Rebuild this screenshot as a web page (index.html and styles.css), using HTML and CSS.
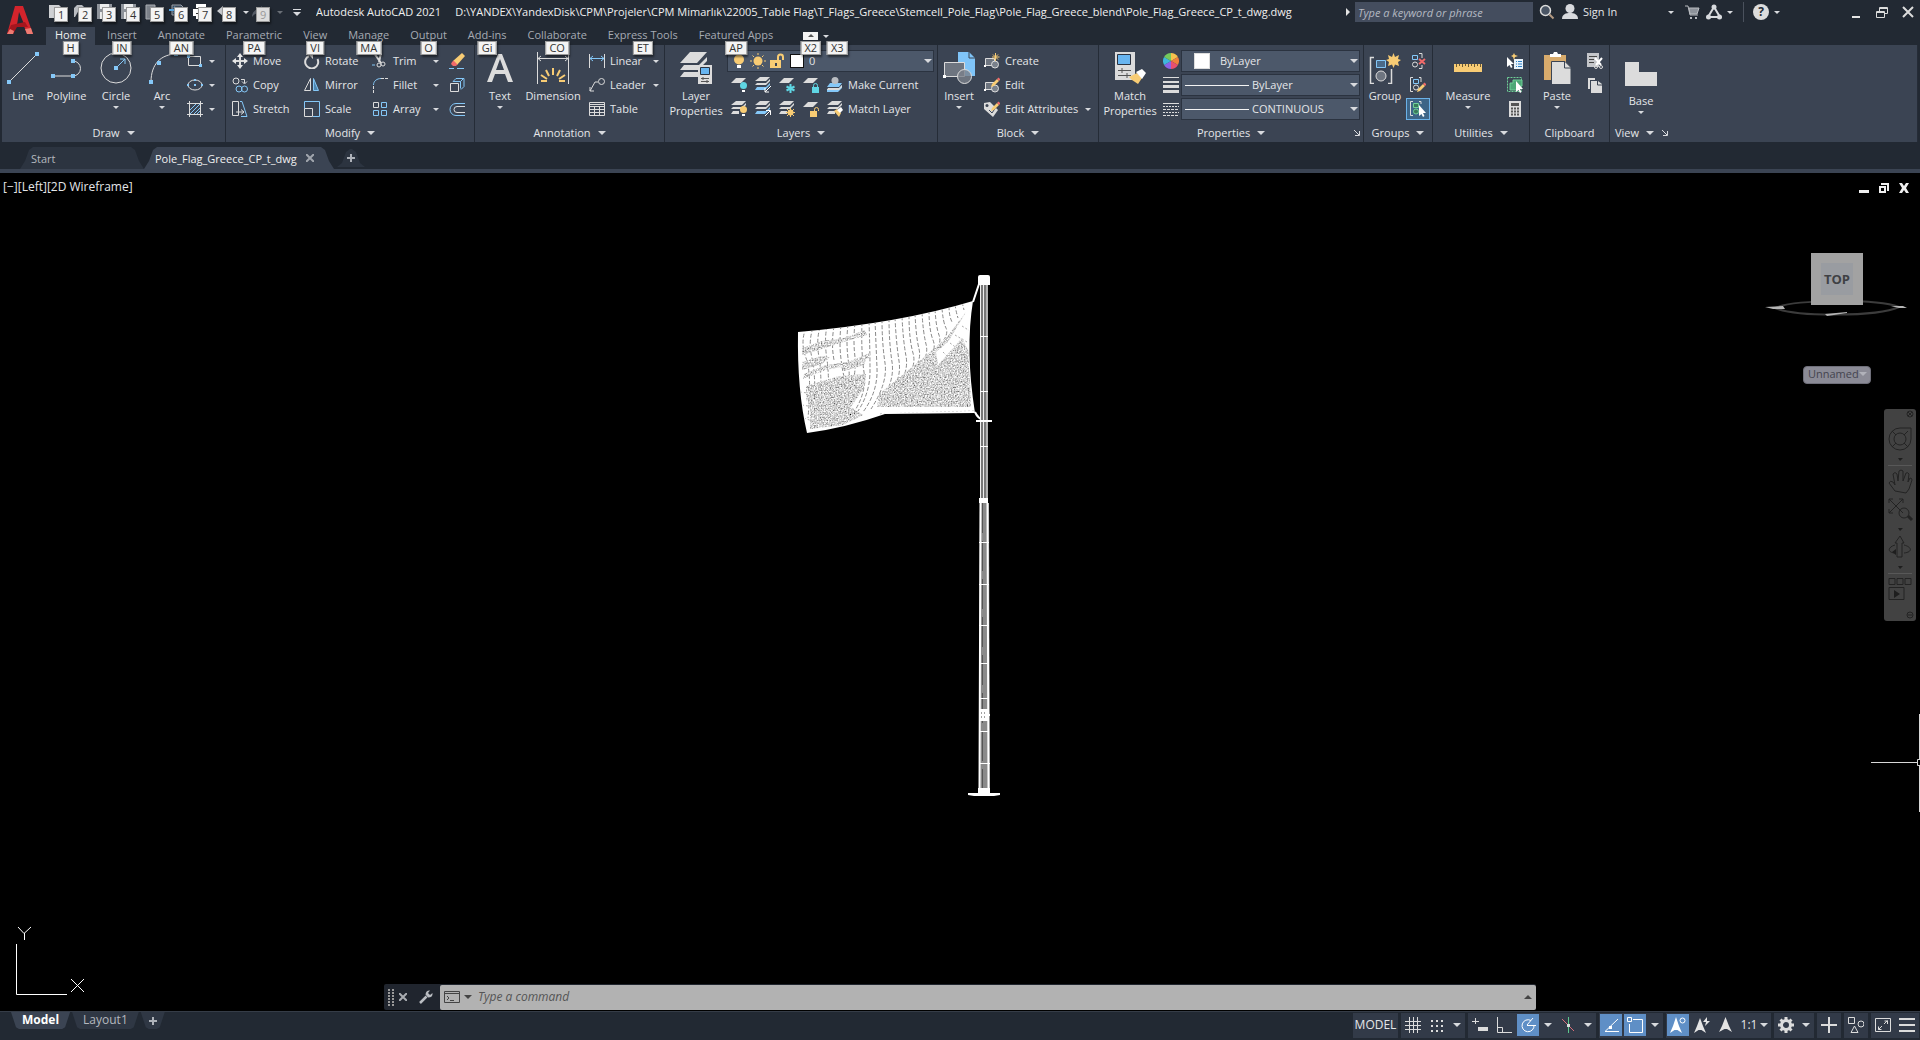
FILE: index.html
```html
<!DOCTYPE html>
<html lang="en">
<head>
<meta charset="utf-8">
<title>Autodesk AutoCAD 2021</title>
<link rel="stylesheet" href="styles.css">
</head>
<body>
<svg class="sprite" aria-hidden="true">
  <symbol id="arrow" viewBox="0 0 8 4"><path d="M0 0h8L4 4z" fill="#d8dade" stroke="none"/></symbol>
  <symbol id="launcher" viewBox="0 0 8 8"><path d="M1 1l5 5M6.500 2v4.500H2" stroke="#d8dade" fill="none"/></symbol>
  <!-- quick access -->
  <symbol id="new" viewBox="0 0 16 16"><path d="M0 1h10l3 3v10H0z" fill="#cfd1d4" stroke="none"/></symbol>
  <symbol id="open" viewBox="0 0 16 16"><path d="M1 13V4l3-3h5l2 2v3H6l-4 7z" fill="#b9bcc1" stroke="none"/></symbol>
  <symbol id="save" viewBox="0 0 16 16"><path d="M0 0h15v15H0z" fill="#8f949b" stroke="none"/><path d="M3 0h9v5H3zM3 8h9v7H3z" fill="#eceded" stroke="none"/></symbol>
  <symbol id="webopen" viewBox="0 0 16 16"><path d="M1 1h9v14H1z" fill="#7d828a" stroke="#aaadb2"/></symbol>
  <symbol id="websave" viewBox="0 0 16 16"><path d="M3 1h9l2 2v8H3z" fill="#3c4a5a" stroke="#9aa0a8"/><path d="M0 6h8M5 3l3 3-3 3" stroke="#58a6e0" stroke-width="2" fill="none"/></symbol>
  <symbol id="print" viewBox="0 0 16 16"><path d="M3 0h10v4H3zM0 5h16v7H0zM3 10h10v5H3z" fill="#fff" stroke="none"/><path d="M3 4.500h10M3 9.500h10" stroke="#333"/></symbol>
  <symbol id="undo" viewBox="0 0 16 16"><path d="M0 7l6-5v3c6 0 9 3 9 8-2-3-4-4-9-4v3z" fill="#c9cbcf" stroke="none"/></symbol>
  <symbol id="redo" viewBox="0 0 16 16"><path d="M16 7l-6-5v3C4 5 1 8 1 13c2-3 4-4 9-4v3z" fill="#555c67" stroke="none"/></symbol>
  <!-- draw -->
  <symbol id="line" viewBox="0 0 32 32"><path d="M2 30L30 2"/><path d="M0 28h4v4H0zM28 0h4v4h-4z" fill="#85c8f8" stroke="none"/></symbol>
  <symbol id="polyline" viewBox="0 0 32 32"><path d="M2 24h20M22 9a7.500 7.500 0 010 15"/><path d="M0 22h4v4H0zM20 22h4v4h-4zM20 7h4v4h-4z" fill="#85c8f8" stroke="none"/></symbol>
  <symbol id="circle" viewBox="0 0 32 32"><circle cx="16" cy="16" r="15"/><path d="M16 16l9-9M20 7h5v5" stroke="#85c8f8"/><path d="M14 14h4v4h-4z" fill="#85c8f8" stroke="none"/></symbol>
  <symbol id="arc" viewBox="0 0 32 32"><path d="M5 30C5 12 15 2 31 2"/><path d="M3 28h4v4H3zM11 9h4v4h-4zM28 0h4v4h-4z" fill="#85c8f8" stroke="none"/></symbol>
  <symbol id="rect" viewBox="0 0 16 16"><path d="M1.500 3.500h12v9h-12z"/><path d="M0 2h3v3H0zM12 11h3v3h-3z" fill="#85c8f8" stroke="none"/></symbol>
  <symbol id="ellipse" viewBox="0 0 16 16"><ellipse cx="8" cy="8" rx="7" ry="5"/><path d="M0 7h2v2H0zM7 7h2v2H7zM14 7h2v2h-2zM7 2h2v2H7z" fill="#85c8f8" stroke="none"/></symbol>
  <symbol id="hatch" viewBox="0 0 16 16"><path d="M3 9l6-6M3 13L13 3M7 13l6-6M10 13l3-3" stroke="#85c8f8"/><path d="M2.500 0v16M13.500 0v16M0 2.500h16M0 13.500h16"/></symbol>
  <!-- modify -->
  <symbol id="move" viewBox="0 0 16 16"><path d="M8 2v12M2 8h12" stroke-width="2"/><path d="M8 0l3 4H5zM8 16l3-4H5zM0 8l4-3v6zM16 8l-4-3v6z" fill="#e8e8e8" stroke="none"/></symbol>
  <symbol id="copy" viewBox="0 0 16 16"><circle cx="4" cy="4" r="3"/><path d="M9 2.500h3.500V6M10 4.500L12.500 7 15 4.500"/><g stroke="#85c8f8"><circle cx="7" cy="12" r="3"/><circle cx="12.500" cy="12" r="3"/></g></symbol>
  <symbol id="stretch" viewBox="0 0 16 16"><path d="M.5.500h6v14h-6zM4 11h8M9 8.500l3 2.500-3 2.500"/><path d="M8 .500h2l5 15H9" stroke="#85c8f8"/></symbol>
  <symbol id="rotate" viewBox="0 0 16 16"><path d="M13.500 6A6.500 6.500 0 115 3" stroke-width="2"/><path d="M3 0h6v6z" fill="#e8e8e8" stroke="none"/></symbol>
  <symbol id="mirror" viewBox="0 0 16 16"><path d="M6.500 1.500v12h-6z"/><path d="M9.500 1.500v12h5z" fill="#4f86b0" stroke="#85c8f8"/></symbol>
  <symbol id="scale" viewBox="0 0 16 16"><path d="M.5 7.500V.500h15v15H9" stroke="#85c8f8"/><path d="M.5 7.500h8v8h-8z"/></symbol>
  <symbol id="trim" viewBox="0 0 16 16"><path d="M2 0l7 10M9 0L7 9" stroke-width="2"/><circle cx="7" cy="12" r="2"/><circle cx="11" cy="11" r="2"/><path d="M0 12h3" stroke="#85c8f8"/></symbol>
  <symbol id="fillet" viewBox="0 0 16 16"><path d="M1.500 8C1.500 4 5 1.500 9 1.500" stroke="#85c8f8"/><path d="M1.500 9v7M9 1.500h7" stroke-dasharray="3 1"/></symbol>
  <symbol id="array" viewBox="0 0 16 16"><path d="M1.500 1.500h5v5h-5z"/><path d="M9.500 1.500h5v5h-5zM1.500 9.500h5v5h-5zM9.500 9.500h5v5h-5z" stroke="#85c8f8"/></symbol>
  <symbol id="erase" viewBox="0 0 16 16"><path d="M4 8l9-8 3 3-8 9z" fill="#f8cc74" stroke="none"/><path d="M3 9l1.500-1.500 4 4L7 13H4l-2-2z" fill="#f06a6a" stroke="none"/><path d="M0 15.500h5M8 15.500h7" stroke="#85c8f8"/></symbol>
  <symbol id="explode" viewBox="0 0 16 16"><path d="M1.500 6.500h8v8h-8z"/><path d="M4 4.500L7 1.500h8v8l-3 3M4 4.500h7.500v7M11.500 4.500l3-3" stroke="#85c8f8"/></symbol>
  <symbol id="offset" viewBox="0 0 16 16"><path d="M16 2.500H7a5.500 5.500 0 000 12h9" stroke="#85c8f8"/><path d="M16 5.500H8a3 3 0 000 6h8"/></symbol>
  <!-- annotation -->
  <symbol id="text" viewBox="0 0 32 32"><path d="M3 30L14 2h4l11 28h-5l-3-8H11l-3 8zM12 18h8L16 7z" fill="#dcdcdc" fill-rule="evenodd" stroke="none"/></symbol>
  <symbol id="dimension" viewBox="0 0 32 32"><path d="M.5 0v32M31.500 0v32M1 6.500h30M4 4L1 6.500 4 9M28 4l3 2.500L28 9"/><path d="M16 16v7M9 18l3 6M23 18l-3 6M4 23l6 4M28 23l-6 4M4 29h6M22 29h6" stroke="#f8cc74" stroke-width="2"/></symbol>
  <symbol id="linear" viewBox="0 0 16 16"><path d="M.5 1v14M15.500 1v14"/><path d="M1 5.500h14M4 3L1 5.500 4 8M12 3l3 2.500L12 8" stroke="#85c8f8"/></symbol>
  <symbol id="leader" viewBox="0 0 16 16"><circle cx="12.500" cy="4.500" r="3"/><path d="M9 5H6l-5 9M1 10v4h4"/></symbol>
  <symbol id="table" viewBox="0 0 16 16"><path d="M.5 1.500h15v13H.500zM1 5.500h14M1 8.500h14M1 11.500h14M5.500 6v8M10.500 6v8M1 3.500h14"/></symbol>
  <!-- layers -->
  <symbol id="layerprops" viewBox="0 0 32 32"><g fill="#dcdcdc" stroke="none"><path d="M10 0h17l-10 11H0zM4 13h15l8-8v4l-9 9H0zM4 20h14v5H0z"/><path d="M18 13h14v19H18z"/></g><path d="M20.500 15.500h9v7h-9z" fill="#68b5f0" stroke="#2b3340"/><path d="M21 26.500h8M21 29.500h8M23 25v3M27 28v3" stroke="#555"/></symbol>
  <symbol id="bulb" viewBox="0 0 16 16"><circle cx="8" cy="6.500" r="5" fill="#f8cc74" stroke="none"/><path d="M6 12h4v3H6z" fill="#fff" stroke="none"/></symbol>
  <symbol id="sun" viewBox="0 0 16 16"><circle cx="8" cy="8" r="4.500" fill="#f8cc74" stroke="none"/><path d="M8 0v2M8 14v2M0 8h2M14 8h2M2.500 2.500L4 4M12 12l1.500 1.500M2.500 13.500L4 12M12 4l1.500-1.500" stroke="#f8cc74"/></symbol>
  <symbol id="unlock" viewBox="0 0 16 16"><path d="M1 7h11v8H1z" fill="#f8cc74" stroke="none"/><path d="M9 7V4a2.500 2.500 0 015 0v3" stroke="#f8cc74" stroke-width="2"/><path d="M6 10h2v3H6z" fill="#3b4453" stroke="none"/></symbol>
  <symbol id="sheet" viewBox="0 0 16 16"><path d="M5 1h10l-5 5H0z" fill="#dcdcdc" stroke="none"/></symbol>
  <symbol id="sheets" viewBox="0 0 16 16"><path d="M5 0h10l-4 4H0zM2 6h9l4-4v2l-4 4H0z" fill="#dcdcdc" stroke="none"/><path d="M2 10h9l4-4v2l-5 5H0z" fill="#85c8f8" stroke="none"/></symbol>
  <symbol id="sheetsg" viewBox="0 0 16 16"><path d="M5 0h10l-4 4H0zM2 6h9l4-4v2l-4 4H0zM2 10h6v3H0z" fill="#dcdcdc" stroke="none"/></symbol>
  <symbol id="layoff" viewBox="0 0 16 16"><use href="#sheet"/><circle cx="12.500" cy="8.500" r="3.500" fill="#5fd6e4" stroke="none"/><path d="M11 13h3v2h-3z" fill="#fff" stroke="none"/></symbol>
  <symbol id="layiso" viewBox="0 0 16 16"><use href="#sheets"/><path d="M16 9l-6 6M10 11v4h4" stroke="#fff"/></symbol>
  <symbol id="layfrz" viewBox="0 0 16 16"><use href="#sheet"/><path d="M11.500 7v9M7.500 9.500l8 4M7.500 13.500l8-4" stroke="#5fd6e4" stroke-width="2"/></symbol>
  <symbol id="laylock" viewBox="0 0 16 16"><use href="#sheet"/><path d="M9 10h7v6H9z" fill="#5fd6e4" stroke="none"/><path d="M10.500 10V8.500a2 2 0 014 0V10" stroke="#5fd6e4"/></symbol>
  <symbol id="makecur" viewBox="0 0 16 16"><path d="M3 6h12l-3 4H0zM0 12h11l4-4v3l-4 4H0z" fill="#85c8f8" stroke="none"/><path d="M1 11h11l3-3v2l-3 3H0z" fill="#dcdcdc" stroke="none"/><circle cx="8" cy="3.500" r="3.500" fill="#b9bcc1" stroke="none"/></symbol>
  <symbol id="layon" viewBox="0 0 16 16"><use href="#sheetsg"/><circle cx="12.500" cy="8.500" r="3.500" fill="#f8cc74" stroke="none"/><path d="M11 13h3v2h-3z" fill="#fff" stroke="none"/></symbol>
  <symbol id="layuniso" viewBox="0 0 16 16"><use href="#sheets"/><path d="M10 15l5-5M11 9.500h4.500V14" stroke="#fff"/></symbol>
  <symbol id="laythaw" viewBox="0 0 16 16"><use href="#sheetsg"/><circle cx="11.500" cy="11.500" r="3" fill="#f8cc74" stroke="none"/><path d="M11.500 7v9M7 11.500h9M8 8l7 7M15 8l-7 7" stroke="#f8cc74"/></symbol>
  <symbol id="layunlock" viewBox="0 0 16 16"><use href="#sheet"/><path d="M7 10h7v6H7z" fill="#f8cc74" stroke="none"/><path d="M11.500 10V8.500a2 2 0 014 0V10" stroke="#f8cc74"/></symbol>
  <symbol id="matchlay" viewBox="0 0 16 16"><use href="#sheetsg"/><path d="M7 10l3-2 4 4-2 4z" fill="#f8cc74" stroke="none"/><path d="M10 9l4-3 2 3-3 3z" fill="#fff" stroke="none"/></symbol>
  <!-- block -->
  <symbol id="insert" viewBox="0 0 32 32"><path d="M15 0h11l6 6v18H15z" fill="#7fc4f8" stroke="none"/><path d="M26 0v6h6" stroke="#3b4453"/><path d="M1.500 10.500h20v14h-20z" fill="#6e7580"/><circle cx="21.500" cy="24.500" r="7" fill="#7a818b" fill-opacity=".8"/><path d="M0 23h3v3H0z" fill="#fff" stroke="none"/></symbol>
  <symbol id="blk" viewBox="0 0 16 16"><path d="M1.500 5.500h9v7h-9z" fill="#6e7580"/><circle cx="11" cy="11.500" r="3.500" fill="#7a818b"/><path d="M0 12h2v2H0z" fill="#fff" stroke="none"/></symbol>
  <symbol id="create" viewBox="0 0 16 16"><use href="#blk"/><path d="M11.500 0v8M8 4h7.500M9 1.500l5 5M14 1.500l-5 5" stroke="#f8cc74"/></symbol>
  <symbol id="edit" viewBox="0 0 16 16"><use href="#blk"/><path d="M8 7l5-5 2 2-5 5-3 1z" fill="#f8cc74" stroke="none"/><path d="M13 2l1.500-1.500 2 2L15 4z" fill="#f06a6a" stroke="none"/></symbol>
  <symbol id="attr" viewBox="0 0 16 16"><path d="M0 2l6-1 8 8-5 7-9-8z" fill="#dcdcdc" stroke="none"/><circle cx="3" cy="4.500" r="1.500" fill="#3b4453" stroke="none"/><path d="M5 9l3 3 4-6" stroke="#3b4453"/><path d="M8 7l5-5 2 2-5 5-3 1z" fill="#f8cc74" stroke="none"/><path d="M13 2l1.500-1.500 2 2L15 4z" fill="#f06a6a" stroke="none"/></symbol>
  <!-- properties -->
  <symbol id="matchprops" viewBox="0 0 32 32"><path d="M1 0h20v28H1z" fill="#dcdcdc" stroke="none"/><path d="M3.500 2.500h13v10h-13z" fill="#68b5f0" stroke="#2b3340"/><path d="M4 18.500h13M4 23.500h13M8 16v5M13 21v5" stroke="#555"/><path d="M15 25l8-4 5 5-4 6-6-4z" fill="#f8cc74" stroke="none"/><path d="M22 20l6-3 4 4-4 6z" fill="#fff" stroke="none"/></symbol>
  <symbol id="wheel" viewBox="0 0 16 16"><g stroke="none"><path d="M8 8V0a8 8 0 016.900 4z" fill="#f6c04d"/><path d="M8 8l6.900-4a8 8 0 010 8z" fill="#f0803c"/><path d="M8 8l6.900 4A8 8 0 018 16z" fill="#e8506e"/><path d="M8 8v8a8 8 0 01-6.900-4z" fill="#8a63e8"/><path d="M8 8l-6.900 4a8 8 0 010-8z" fill="#3fb7dd"/><path d="M8 8L1.100 4A8 8 0 018 0z" fill="#74c95c"/></g></symbol>
  <symbol id="weights" viewBox="0 0 16 16"><path d="M0 0h16v1H0zM0 4h16v2H0zM0 8h16v3H0zM0 13h16v3H0z" fill="#dcdcdc" stroke="none"/></symbol>
  <symbol id="types" viewBox="0 0 16 16"><path d="M0 2.500h16" /><path d="M0 5.500h16M0 11.500h16" stroke-dasharray="2 1"/><path d="M0 8.500h16M0 14.500h16" stroke-dasharray="3 1"/></symbol>
  <!-- groups -->
  <symbol id="group" viewBox="0 0 32 32"><path d="M5 5.500H1.500v26H5M19 31.500h3.500V17" stroke-width="1.500"/><path d="M7.500 8.500h9v7h-9z" stroke="#85c8f8" fill="#4a6a88"/><circle cx="12" cy="24" r="5" fill="#6e7580"/><path d="M24.500 1l1.500 4 4-2-1 4 3 1-3 2 1 4-4-1.500L24.500 16 23 12.500 19 14l1-4-3-2 3-1-1-4 4 2z" fill="#f8cc74" stroke="none"/></symbol>
  <symbol id="ungroup" viewBox="0 0 16 16"><path d="M2.500 2.500h5v4h-5z" stroke="#85c8f8"/><circle cx="5" cy="11.500" r="2.500"/><path d="M9 .500h3V5M9 15.500h3V12"/><path d="M9 6l6 5M15 6l-6 5" stroke="#f06a6a" stroke-width="2"/></symbol>
  <symbol id="groupedit" viewBox="0 0 16 16"><path d="M3 .500H.500v14H3M9 .500h2V5"/><path d="M3.500 2.500h5v4h-5z" stroke="#85c8f8"/><circle cx="6" cy="10.500" r="2.500"/><path d="M8 12l5-5 2 2-5 5-3 1z" fill="#f8cc74" stroke="none"/><path d="M13 7l1.500-1.500 2 2L15 9z" fill="#f06a6a" stroke="none"/></symbol>
  <symbol id="groupsel" viewBox="0 0 16 16"><path d="M3 .500H.500v14H3M9 .500h2V3"/><path d="M3.500 2.500h5v4h-5z" stroke="#6fce97" fill="#3a7a5c"/><circle cx="6" cy="10.500" r="2.500" stroke="#6fce97" fill="#3a7a5c"/><path d="M9 4v11l2.500-2 1.500 3 1.500-1-1.500-3H16z" fill="#fff" stroke="none"/></symbol>
  <!-- utilities, clipboard, view -->
  <symbol id="measure" viewBox="0 0 32 32"><path d="M2 12h28v8H2z" fill="#f8cc74" stroke="none"/><path d="M4.500 12v3M7.500 12v2M10.500 12v3M13.500 12v2M16.500 12v3M19.500 12v2M22.500 12v3M25.500 12v2M28.500 12v3" stroke="#6b5a35"/></symbol>
  <symbol id="qselect" viewBox="0 0 16 16"><path d="M7 6h9v10H7z" fill="#e8f2fa" stroke="none"/><path d="M9 8.500h1M11 8.500h4M9 11h1M11 11h4M9 13.500h1M11 13.500h4" stroke="#2a7fc4"/><path d="M0 4v10l2.500-2L4 15l1.500-1L4 11h3z" fill="#fff" stroke="none"/><path d="M7 0l1 2 3 1-3 1-1 3-1-3-2-1 2-1z" fill="#f8cc74" stroke="none"/></symbol>
  <symbol id="selall" viewBox="0 0 16 16"><path d="M.5.500h14v14H.500z" stroke="#6fce97" stroke-dasharray="2 1"/><path d="M3 6h3V3h9v6h-4v4H3z" fill="#4da877" stroke="#6fce97"/><path d="M9 4v11l2.500-2 1.500 3 1.500-1-1.500-3H16z" fill="#fff" stroke="none"/></symbol>
  <symbol id="calc" viewBox="0 0 16 16"><path d="M2 0h12v16H2z" fill="#dcdcdc" stroke="none"/><path d="M4 3.500h8" stroke="#555" stroke-width="3"/><path d="M4 7.500h8M4 10.500h8M4 13.500h8" stroke="#555" stroke-width="2" stroke-dasharray="2 1"/></symbol>
  <symbol id="paste" viewBox="0 0 32 32"><path d="M3 3h22v25H3z" fill="#d8ab6c" stroke="none"/><path d="M9 5V2h3l1-2h3l1 2h3v3z" fill="#fff" stroke="none"/><path d="M10.500 9.500H24l6 6v17H10.500z" fill="#dcdcdc" stroke="#3b4453"/><path d="M23.500 10v6H30" stroke="#3b4453"/></symbol>
  <symbol id="cut" viewBox="0 0 16 16"><path d="M0 0h12v14H0z" fill="#c4c6ca" stroke="none"/><path d="M2 3.500h8M2 6.500h5M2 9.500h5" stroke="#444"/><path d="M8 5l6 7M15 5l-6 7" stroke="#fff" stroke-width="2"/><circle cx="9" cy="14" r="1.500"/><circle cx="14" cy="14" r="1.500"/></symbol>
  <symbol id="copyclip" viewBox="0 0 16 16"><path d="M1 1h7v2H3v9H1z" fill="#dcdcdc" stroke="none"/><path d="M4 4h7l4 3v9H4z" fill="#dcdcdc" stroke="none"/><path d="M10.500 4v4H15" stroke="#3b4453"/></symbol>
  <symbol id="base" viewBox="0 0 32 32"><path d="M0 5h14v10h18v14H0z" fill="#dcdcdc" stroke="none"/></symbol>
  <!-- title bar -->
  <symbol id="search" viewBox="0 0 16 16"><circle cx="6.500" cy="6.500" r="5" fill="#4a5565" stroke-width="1.500"/><path d="M10.500 10.500l4 4" stroke="#b49a82" stroke-width="2"/></symbol>
  <symbol id="user" viewBox="0 0 16 16"><circle cx="8" cy="4.500" r="4.500" fill="#d8dade" stroke="none"/><path d="M0 15c0-5 4-6 8-6s8 1 8 6z" fill="#d8dade" stroke="none"/></symbol>
  <symbol id="cart" viewBox="0 0 16 16"><path d="M1 2h3l2 9h8" stroke="#b9bcc1"/><path d="M5 4h10l-2 6H6z" fill="#8e939b" stroke="#b9bcc1"/><path d="M6 13h2v2H6zM11 13h2v2h-2z" fill="#b9bcc1" stroke="none"/></symbol>
  <symbol id="a360" viewBox="0 0 16 16"><path d="M8 3L2 13h12z" stroke="#d8dade" stroke-width="2"/><g fill="#d8dade" stroke="none"><circle cx="8" cy="3" r="2.500"/><circle cx="2.500" cy="13" r="2.500"/><circle cx="13.500" cy="13" r="2.500"/></g></symbol>
  <symbol id="min" viewBox="0 0 16 16"><path d="M4 12h8v2H4z" fill="#e4e4e4" stroke="none"/></symbol>
  <symbol id="restore" viewBox="0 0 16 16"><path d="M2.500 7.500h8v6h-8zM5.500 7V3.500h8v6H11M5.500 4.500h8M2.500 8.500h8"/></symbol>
  <symbol id="close" viewBox="0 0 16 16"><path d="M3 3l10 10M13 3L3 13" stroke-width="2"/></symbol>
  <symbol id="plus" viewBox="0 0 16 16"><path d="M8 4v8M4 8h8" stroke="#aeb2b9" stroke-width="2"/></symbol>
  <!-- status bar -->
  <symbol id="grid" viewBox="0 0 16 16"><path d="M4.500 0v16M8.500 0v16M12.500 0v16M0 4.500h16M0 8.500h16M0 12.500h16"/></symbol>
  <symbol id="snap" viewBox="0 0 16 16"><path d="M2 3h2v2H2zM7 3h2v2H7zM12 3h2v2h-2zM2 8h2v2H2zM7 8h2v2H7zM12 8h2v2h-2zM2 13h2v2H2zM7 13h2v2H7zM12 13h2v2h-2z" fill="#dcdcdc" stroke="none"/></symbol>
  <symbol id="dyn" viewBox="0 0 16 16"><path d="M3.500 1v6M0 4.500h7"/><path d="M6 10h10v4H6z" fill="#dcdcdc" stroke="none"/></symbol>
  <symbol id="ortho" viewBox="0 0 16 16"><path d="M1.500 0v15.500H16M1.500 10.500h5v5"/></symbol>
  <symbol id="polar" viewBox="0 0 16 16"><path d="M11 3.500a6 6 0 103 4.500M7 8l6-7M7 8.500h9" stroke="#fff"/></symbol>
  <symbol id="isodraft" viewBox="0 0 16 16"><path d="M2 2l12 12" stroke="#d8707a"/><path d="M8.500 0v16" stroke="#5cc78c"/><path d="M7 7h3v3H7z" fill="#dcdcdc" stroke="none"/></symbol>
  <symbol id="otrack" viewBox="0 0 16 16"><path d="M15 2L2 14.500h14" stroke="#fff"/><path d="M6 9h3v3H6z" fill="#fff" stroke="none"/></symbol>
  <symbol id="osnap" viewBox="0 0 16 16"><path d="M6 2.500h9.500v13h-13V7M.5.500h4v4h-4z" stroke="#fff"/></symbol>
  <symbol id="anno" viewBox="0 0 16 16"><path d="M7.500 0L11 9l3 6-5-3H6.500L1 15l3-6z" fill="#e4e4e4" stroke="none"/></symbol>
  <symbol id="annovis" viewBox="0 0 16 16"><path d="M6 0l3 9 3 7-4.500-3h-3L0 16l3-7z" fill="#fff" stroke="none"/><circle cx="12.500" cy="3.500" r="2.500" stroke="#fff"/></symbol>
  <symbol id="annoauto" viewBox="0 0 16 16"><path d="M6 1l3 8 3 7-4.500-3h-3L0 16l3-7z" fill="#e4e4e4" stroke="none"/><path d="M13 0L9 5h3l-1 4 5-5h-3z" fill="#e4e4e4" stroke="none"/></symbol>
  <symbol id="gear" viewBox="0 0 16 16"><circle cx="8" cy="8" r="4.500" stroke-width="3"/><path d="M8 0v3M8 13v3M0 8h3M13 8h3M2.500 2.500l2 2M11.500 11.500l2 2M2.500 13.500l2-2M11.500 4.500l2-2" stroke-width="3"/></symbol>
  <symbol id="bigplus" viewBox="0 0 16 16"><path d="M8 0v16M0 8h16" stroke-width="2"/></symbol>
  <symbol id="isolate" viewBox="0 0 16 16"><path d="M.5.500h6v6h-6zM3 15.500h7L6.500 9z"/><circle cx="13" cy="7" r="3"/></symbol>
  <symbol id="clean" viewBox="0 0 16 16"><path d="M.5 1.500h15v13H.500zM9 7l3.500-3.500M9.500 4H12.500v3M7 9l-3.500 3.500M3.500 9.500v3h3"/></symbol>
  <symbol id="menu" viewBox="0 0 16 16"><path d="M0 2h16M0 8h16M0 14h16" stroke-width="2"/></symbol>
</svg>

<header class="header">
  <button class="logo" aria-label="Application menu">
    <svg viewBox="0 0 26 28"><path d="M8 0h8l10 28h-6l-3-8H9L6 28H0z" fill="#d3242c"/><path d="M12 6l5 12-7 1z" fill="#222933"/><path d="M0 28l4-9 14-3 3 5H10l-4 7z" fill="#a5161e"/><path d="M0 28l3-5 4 2-1 3zM20 28l-2-5 6-1 2 6z" fill="#ee7b72"/></svg>
  </button>
  <div class="titlebar">
    <div class="qat">
      <button aria-label="New"><svg class="i"><use href="#new"/></svg><kbd>1</kbd></button>
      <button aria-label="Open"><svg class="i"><use href="#open"/></svg><kbd>2</kbd></button>
      <button aria-label="Save"><svg class="i"><use href="#save"/></svg><kbd>3</kbd></button>
      <button aria-label="Save as"><svg class="i"><use href="#save"/></svg><kbd>4</kbd></button>
      <button aria-label="Open from web"><svg class="i"><use href="#webopen"/></svg><kbd>5</kbd></button>
      <button aria-label="Save to web"><svg class="i"><use href="#websave"/></svg><kbd>6</kbd></button>
      <button aria-label="Plot"><svg class="i"><use href="#print"/></svg><kbd>7</kbd></button>
      <button aria-label="Undo"><svg class="i"><use href="#undo"/></svg><kbd>8</kbd></button>
      <button class="slim" aria-label="Undo list"><svg class="dd"><use href="#arrow"/></svg></button>
      <button aria-label="Redo"><svg class="i"><use href="#redo"/></svg><kbd class="off">9</kbd></button>
      <button class="slim dim" aria-label="Redo list"><svg class="dd"><use href="#arrow"/></svg></button>
      <button class="customize" aria-label="Customize"><svg class="ar"><use href="#arrow"/></svg></button>
    </div>
    <h1 class="title"><span>Autodesk AutoCAD 2021</span><span>D:\YANDEX\YandexDisk\CPM\Projeler\CPM Mimarlık\22005_Table Flag\T_Flags_Greece\Stemcell_Pole_Flag\Pole_Flag_Greece_blend\Pole_Flag_Greece_CP_t_dwg.dwg</span></h1>
    <div class="tools">
      <button class="expand" aria-label="Expand search"></button>
      <input class="find" type="text" aria-label="Search" placeholder="Type a keyword or phrase">
      <button aria-label="Search"><svg class="i"><use href="#search"/></svg></button>
      <button class="signin"><svg class="i"><use href="#user"/></svg>Sign In<svg class="dd"><use href="#arrow"/></svg></button>
      <button aria-label="Store"><svg class="i"><use href="#cart"/></svg></button>
      <button class="pair" aria-label="Autodesk apps"><svg class="i"><use href="#a360"/></svg><svg class="dd"><use href="#arrow"/></svg></button>
      <button class="pair help" aria-label="Help"><span class="q">?</span><svg class="dd"><use href="#arrow"/></svg></button>
    </div>
    <div class="win">
      <button aria-label="Minimize"><svg class="i"><use href="#min"/></svg></button>
      <button aria-label="Restore"><svg class="i"><use href="#restore"/></svg></button>
      <button aria-label="Close"><svg class="i"><use href="#close"/></svg></button>
    </div>
  </div>
  <nav class="tabs">
    <a href="#home" class="on">Home<kbd>H</kbd></a>
    <a href="#insert">Insert<kbd>IN</kbd></a>
    <a href="#annotate">Annotate<kbd>AN</kbd></a>
    <a href="#parametric">Parametric<kbd>PA</kbd></a>
    <a href="#view">View<kbd>VI</kbd></a>
    <a href="#manage">Manage<kbd>MA</kbd></a>
    <a href="#output">Output<kbd>O</kbd></a>
    <a href="#addins">Add-ins<kbd>Gi</kbd></a>
    <a href="#collaborate">Collaborate<kbd>CO</kbd></a>
    <a href="#express">Express Tools<kbd>ET</kbd></a>
    <a href="#apps">Featured Apps<kbd>AP</kbd></a>
    <button class="collapse" aria-label="Minimize ribbon"><i></i><kbd>X2</kbd></button>
    <button class="collapse-list" aria-label="Ribbon options"><svg class="dd"><use href="#arrow"/></svg><kbd>X3</kbd></button>
  </nav>
</header>

<section class="ribbon">
  <div class="panel draw">
    <div class="cells">
      <button class="big"><svg><use href="#line"/></svg>Line</button>
      <button class="big"><svg><use href="#polyline"/></svg>Polyline</button>
      <button class="big"><svg><use href="#circle"/></svg>Circle<svg class="dd"><use href="#arrow"/></svg></button>
      <button class="big"><svg><use href="#arc"/></svg>Arc<svg class="dd"><use href="#arrow"/></svg></button>
      <button class="small split" aria-label="Rectangle"><svg class="i"><use href="#rect"/></svg><svg class="dd"><use href="#arrow"/></svg></button>
      <button class="small split" aria-label="Ellipse"><svg class="i"><use href="#ellipse"/></svg><svg class="dd"><use href="#arrow"/></svg></button>
      <button class="small split" aria-label="Hatch"><svg class="i"><use href="#hatch"/></svg><svg class="dd"><use href="#arrow"/></svg></button>
    </div>
    <button class="name">Draw<svg class="ar"><use href="#arrow"/></svg></button>
  </div>
  <div class="panel modify">
    <div class="cells">
      <button class="small"><svg class="i"><use href="#move"/></svg>Move</button>
      <button class="small"><svg class="i"><use href="#copy"/></svg>Copy</button>
      <button class="small"><svg class="i"><use href="#stretch"/></svg>Stretch</button>
      <button class="small"><svg class="i"><use href="#rotate"/></svg>Rotate</button>
      <button class="small"><svg class="i"><use href="#mirror"/></svg>Mirror</button>
      <button class="small"><svg class="i"><use href="#scale"/></svg>Scale</button>
      <button class="small split"><svg class="i"><use href="#trim"/></svg>Trim<svg class="dd"><use href="#arrow"/></svg></button>
      <button class="small split"><svg class="i"><use href="#fillet"/></svg>Fillet<svg class="dd"><use href="#arrow"/></svg></button>
      <button class="small split"><svg class="i"><use href="#array"/></svg>Array<svg class="dd"><use href="#arrow"/></svg></button>
      <button class="small" aria-label="Erase"><svg class="i"><use href="#erase"/></svg></button>
      <button class="small" aria-label="Explode"><svg class="i"><use href="#explode"/></svg></button>
      <button class="small" aria-label="Offset"><svg class="i"><use href="#offset"/></svg></button>
    </div>
    <button class="name">Modify<svg class="ar"><use href="#arrow"/></svg></button>
  </div>
  <div class="panel annotation">
    <div class="cells">
      <button class="big"><svg><use href="#text"/></svg>Text<svg class="dd"><use href="#arrow"/></svg></button>
      <button class="big"><svg><use href="#dimension"/></svg>Dimension</button>
      <button class="small split"><svg class="i"><use href="#linear"/></svg>Linear<svg class="dd"><use href="#arrow"/></svg></button>
      <button class="small split"><svg class="i"><use href="#leader"/></svg>Leader<svg class="dd"><use href="#arrow"/></svg></button>
      <button class="small"><svg class="i"><use href="#table"/></svg>Table</button>
    </div>
    <button class="name">Annotation<svg class="ar"><use href="#arrow"/></svg></button>
  </div>
  <div class="panel layers">
    <div class="cells">
      <button class="big"><svg><use href="#layerprops"/></svg>Layer<br>Properties</button>
      <div class="combo">
        <svg class="i"><use href="#bulb"/></svg><svg class="i"><use href="#sun"/></svg><svg class="i"><use href="#unlock"/></svg><span class="swatch"></span>
        <select aria-label="Layer"><option>0</option></select><svg class="ar"><use href="#arrow"/></svg>
      </div>
      <button class="small only" aria-label="Off"><svg class="i"><use href="#layoff"/></svg></button>
      <button class="small only" aria-label="Isolate"><svg class="i"><use href="#layiso"/></svg></button>
      <button class="small only" aria-label="Freeze"><svg class="i"><use href="#layfrz"/></svg></button>
      <button class="small only" aria-label="Lock"><svg class="i"><use href="#laylock"/></svg></button>
      <button class="small"><svg class="i"><use href="#makecur"/></svg>Make Current</button>
      <button class="small only" aria-label="On"><svg class="i"><use href="#layon"/></svg></button>
      <button class="small only" aria-label="Unisolate"><svg class="i"><use href="#layuniso"/></svg></button>
      <button class="small only" aria-label="Thaw"><svg class="i"><use href="#laythaw"/></svg></button>
      <button class="small only" aria-label="Unlock"><svg class="i"><use href="#layunlock"/></svg></button>
      <button class="small"><svg class="i"><use href="#matchlay"/></svg>Match Layer</button>
    </div>
    <button class="name">Layers<svg class="ar"><use href="#arrow"/></svg></button>
  </div>
  <div class="panel block">
    <div class="cells">
      <button class="big"><svg><use href="#insert"/></svg>Insert<svg class="dd"><use href="#arrow"/></svg></button>
      <button class="small"><svg class="i"><use href="#create"/></svg>Create</button>
      <button class="small"><svg class="i"><use href="#edit"/></svg>Edit</button>
      <button class="small split"><svg class="i"><use href="#attr"/></svg>Edit Attributes<svg class="dd"><use href="#arrow"/></svg></button>
    </div>
    <button class="name">Block<svg class="ar"><use href="#arrow"/></svg></button>
  </div>
  <div class="panel properties">
    <div class="cells">
      <button class="big"><svg><use href="#matchprops"/></svg>Match<br>Properties</button>
      <svg class="i mid"><use href="#wheel"/></svg>
      <div class="combo color"><span class="swatch"></span><select aria-label="Object color"><option>ByLayer</option></select><svg class="ar"><use href="#arrow"/></svg></div>
      <svg class="i mid"><use href="#weights"/></svg>
      <div class="combo"><span class="rule"></span><select aria-label="Lineweight"><option>ByLayer</option></select><svg class="ar"><use href="#arrow"/></svg></div>
      <svg class="i mid"><use href="#types"/></svg>
      <div class="combo"><span class="rule"></span><select aria-label="Linetype"><option>CONTINUOUS</option></select><svg class="ar"><use href="#arrow"/></svg></div>
    </div>
    <div class="foot"><button class="name">Properties<svg class="ar"><use href="#arrow"/></svg></button><button class="launch" aria-label="Properties palette"><svg><use href="#launcher"/></svg></button></div>
  </div>
  <div class="panel groups">
    <div class="cells">
      <button class="big"><svg><use href="#group"/></svg>Group</button>
      <button class="small only" aria-label="Ungroup"><svg class="i"><use href="#ungroup"/></svg></button>
      <button class="small only" aria-label="Group edit"><svg class="i"><use href="#groupedit"/></svg></button>
      <button class="small only pressed" aria-label="Group selection" aria-pressed="true"><svg class="i"><use href="#groupsel"/></svg></button>
    </div>
    <button class="name">Groups<svg class="ar"><use href="#arrow"/></svg></button>
  </div>
  <div class="panel utilities">
    <div class="cells">
      <button class="big"><svg><use href="#measure"/></svg>Measure<svg class="dd"><use href="#arrow"/></svg></button>
      <button class="small only" aria-label="Quick select"><svg class="i"><use href="#qselect"/></svg></button>
      <button class="small only" aria-label="Select all"><svg class="i"><use href="#selall"/></svg></button>
      <button class="small only" aria-label="Calculator"><svg class="i"><use href="#calc"/></svg></button>
    </div>
    <button class="name">Utilities<svg class="ar"><use href="#arrow"/></svg></button>
  </div>
  <div class="panel clipboard">
    <div class="cells">
      <button class="big"><svg><use href="#paste"/></svg>Paste<svg class="dd"><use href="#arrow"/></svg></button>
      <button class="small only" aria-label="Cut"><svg class="i"><use href="#cut"/></svg></button>
      <button class="small only" aria-label="Copy clip"><svg class="i"><use href="#copyclip"/></svg></button>
    </div>
    <div class="name">Clipboard</div>
  </div>
  <div class="panel viewp">
    <div class="cells">
      <button class="big"><svg><use href="#base"/></svg>Base<svg class="dd"><use href="#arrow"/></svg></button>
    </div>
    <div class="foot"><button class="name">View<svg class="ar"><use href="#arrow"/></svg></button><button class="launch" aria-label="View options"><svg><use href="#launcher"/></svg></button></div>
  </div>
</section>

<nav class="files">
  <a href="#start" class="file start">Start</a>
  <a href="#drawing" class="file on">Pole_Flag_Greece_CP_t_dwg<svg class="x" viewBox="0 0 8 8"><path d="M0 0l8 8M8 0L0 8"/></svg></a>
  <button class="file add" aria-label="New drawing"><svg class="i"><use href="#plus"/></svg></button>
</nav>

<main class="canvas">
  <svg class="drawing" viewBox="0 173 1920 838" preserveAspectRatio="xMidYMid meet" role="img" aria-label="Flag pole, left view">
    <defs>
      <filter id="grain" x="0" y="0" width="100%" height="100%">
        <feTurbulence type="fractalNoise" baseFrequency="0.7" numOctaves="2" seed="4"/>
        <feColorMatrix values="1.6 0 0 0 -0.15  1.6 0 0 0 -0.15  1.6 0 0 0 -0.15  0 0 0 0 1"/>
        <feComposite in2="SourceGraphic" operator="in"/>
      </filter>
      <clipPath id="cloth"><path d="M799 332Q900 323 972 302Q964 350 974 411L885 413Q845 427 808 432Q798 390 799 332z"/></clipPath>
    </defs>
    <path d="M798 332Q900 323 973 301Q965 350 975 413L885 414Q845 428 807 433Q797 390 798 332z" fill="#fff"/>
    <g clip-path="url(#cloth)">
      <path d="M806 328q-6 14 0 30t2 60M813 328q-5 14-1 30t3 70M820 327q-4 14-1 30t2 70M827 326q-3 14 0 34t0 60M834 326q-3 18 0 34M841 325q-2 18 0 34t4 20M848 324q-2 18 0 34t2 60M855 323q-2 18 0 34t-8 50M862 322q-1 30 2 50t-10 40M869 321q1 28 1 50t-12 40M875 320q1 24 2 48t-14 44M882 319q0 24 3 44t-14 46M889 318q0 24 3 44t-12 40M895 317q1 24 4 44t-12 34M902 316q1 24 4 40t-9 32M909 315q0 24 4 38t-9 28M915 313q1 24 4 36t-8 24M922 312q1 20 4 32t-6 20M929 310q0 20 4 30t-5 18M935 309q1 18 4 26t-4 16M942 308q1 14 4 20t-5 16M949 306q0 10 3 16M955 304q1 8 3 14M962 302q1 4 2 8" fill="none" stroke="#888" stroke-dasharray="4 2"/>
      <path d="M943 352l8 8M950 343l12 9M955 335l12 7M962 326l8 5M800 392l22 3M802 405l18 3M804 418l16 6M880 414l95-3" fill="none" stroke="#aaa" stroke-dasharray="2 2"/>
      <g fill="#fff" filter="url(#grain)">
        <path d="M966 312l-18 30-12 10 2 13 24-27 7 14 2 55h-94l2-13 43-35 25-22z"/>
        <path d="M806 386l33-10 27-2-1 12-14 21 12 8-20 10-33 4 0-20-4-10z"/>
        <path d="M802 348l20-7 22-3 21-8 2 5-20 6-22 7-23 7zM802 362l20-6 8 1-8 7-20 6zM804 374l22-9 22-3 22-9-1 5-22 8-22 4-22 9zM842 367l24-7-2 5-20 6z"/>
      </g>
    </g>
    <path d="M973 302l6-18M975 412q3 7 9 8" stroke="#fff" stroke-width="2" fill="none"/>
    <path d="M980 285h8v213h-8z" fill="#777"/>
    <path d="M980.500 285v213M983.500 285v213M987 285v213" stroke="#eee"/>
    <path d="M980 503h9l1 285h-11z" fill="#8a8a8a"/>
    <path d="M982.500 503v285" stroke="#555" stroke-dasharray="30 8"/>
    <path d="M980.500 503l-1 285M987.500 503l1 285" stroke="#fff" stroke-width="2"/>
    <path d="M980 336.500h8M980 391.500h8M980 446.500h8M979 542.500h10M979 584.500h10M979 625.500h10M979 663.500h10M979 698.500h10M979 731.500h10M979 763.500h11" stroke="#fff"/>
    <path d="M980 275h8q2 0 2 2v8h-12v-8q0-2 2-2zM979 498h9v5h-9zM976 420h16v2h-16zM980 709h8v5h2v2h-2v5h-8zM978 788h12v5h-12zM968 793h32v2l-6 1h-20l-6-1z" fill="#fff"/>
    <path d="M981 713h6M981 717h6" stroke="#444" stroke-dasharray="1 2"/>
  </svg>

  <div class="viewlabel">[−][Left][2D Wireframe]</div>
  <div class="viewwin">
    <button aria-label="Minimize viewport"><svg viewBox="0 0 10 10"><path d="M0 7h10v3H0z"/></svg></button>
    <button aria-label="Restore viewport"><svg viewBox="0 0 10 10"><path d="M2 0h8v8H8V2H2zM0 3h7v7H0zm2 2v3h3V5z" fill-rule="evenodd"/></svg></button>
    <button aria-label="Close viewport"><svg viewBox="0 0 10 10"><path d="M0 0h3l2 3 2-3h3L7 5l3 5H7L5 7l-2 3H0l3-5z"/></svg></button>
  </div>

  <div class="cube">
    <svg viewBox="0 0 142 20" aria-hidden="true"><path d="M10 8C30 -1 112 -1 134 7C112 17 30 17 10 8z" fill="none" stroke="#3c3c3c" stroke-width="2"/><path d="M0 7l18-1 2 3-12 0zM60 14l22-2v1l-20 3zM126 6l8 2 8 0-4-2z" fill="#b4b4b4"/></svg>
    <button class="face"><span>TOP</span></button>
  </div>
  <button class="ucs">Unnamed<svg class="ar"><use href="#arrow"/></svg></button>

  <div class="navbar">
    <svg viewBox="0 0 32 212" aria-label="Navigation bar">
      <g fill="none" stroke="#232323">
        <circle cx="26" cy="5" r="3"/><path d="M24 3l4 4M28 3l-4 4"/>
        <path d="M16 19h11v11a11 11 0 11-11-11z"/><circle cx="16" cy="30" r="6"/><path d="M8 22l4 4M24 38l-4-4M8 38l4-4M20 26l4-4"/>
        <path d="M11 82l-6-8q1-3 4-1l2 3-2-11q2-3 4 0l1 7 1-10q2-2 4 0v10l3-8q2-1 3 1l-1 8 2-4q2 0 2 2l-3 9-3 4z"/>
        <path d="M5 90l14 14M19 90L5 104M5 94v-4h4M15 90h4v4M5 100v4h4"/><circle cx="20" cy="104" r="5"/><path d="M24 107l4 4" stroke-width="3"/>
        <path d="M13 148v-14h-2l5-7 4 7h-2v14zM11 136c-7 2-8 7-1 8M20 136c8 2 9 7 0 8"/>
        <path d="M5 169.500h6v6H5zM13 169.500h6v6h-6zM21 169.500h6v6h-6zM5 178.500h15v12H5z"/><circle cx="26" cy="206" r="3"/><path d="M24 206h4"/>
      </g>
      <path d="M14 49h5l-3 3zM14 119h5l-3 3zM14 157h5l-3 3zM10 181v8l6-4zM8 143l4-3v6z" fill="#1e1e1e"/>
      <path d="M4 56.500h24M4 164.500h24" stroke="#585858"/>
    </svg>
  </div>

  <svg class="axes" viewBox="0 0 72 72" aria-label="UCS icon"><path d="M2.500 19v50.500H53" /><path d="M4 2l6 6.500L17 2M10.500 8v7M57 54l13 13M70 54L57 67"/></svg>
  <svg class="cross" viewBox="0 0 49 98" aria-hidden="true"><path d="M0 48.500h46M48.500 0v45M48.500 52v46M46.500 45.500h4v6h-4z"/></svg>

  <form class="command">
    <span class="grip"></span>
    <button type="button" class="cx" aria-label="Close command line"><svg viewBox="0 0 8 8"><path d="M0 0l8 8M8 0L0 8"/></svg></button>
    <button type="button" class="wrench" aria-label="Customize"><svg viewBox="0 0 14 14"><path d="M1 13l6.500-6.500" stroke="#b9bcc1" stroke-width="2.500"/><path d="M13.500 3L11 5 9 3l2-2.500Q7 0 6.500 4.500L9 7.500Q14 7.500 13.500 3z" fill="#b9bcc1"/></svg></button>
    <label class="field">
      <svg class="prompt" viewBox="0 0 16 12"><path d="M.5.500h15v11H.500zM1 2.500h14M3 5l2 2-2 2M6 9.500h4" fill="none" stroke="#444"/></svg>
      <svg class="ar dark" viewBox="0 0 8 4"><path d="M0 0h8L4 4z"/></svg>
      <input type="text" aria-label="Command" placeholder="Type a command">
      <svg class="ar dark" viewBox="0 0 8 4"><path d="M0 4h8L4 0z"/></svg>
    </label>
  </form>
</main>

<footer class="status">
  <nav class="layouts">
    <a href="#model" class="on">Model</a>
    <a href="#layout1">Layout1</a>
    <button class="add" aria-label="New layout"><svg class="i"><use href="#plus"/></svg></button>
  </nav>
  <div class="toggles">
    <div class="set"><button class="model">MODEL</button></div>
    <div class="set"><button aria-label="Grid"><svg class="i"><use href="#grid"/></svg></button><button aria-label="Snap"><svg class="i"><use href="#snap"/></svg></button><button class="more" aria-label="Snap options"><svg class="ar"><use href="#arrow"/></svg></button></div>
    <div class="set"><button aria-label="Dynamic input"><svg class="i"><use href="#dyn"/></svg></button><button aria-label="Ortho"><svg class="i"><use href="#ortho"/></svg></button><button class="lit" aria-label="Polar tracking" aria-pressed="true"><svg class="i"><use href="#polar"/></svg></button><button class="more" aria-label="Polar options"><svg class="ar"><use href="#arrow"/></svg></button><button aria-label="Isometric drafting"><svg class="i"><use href="#isodraft"/></svg></button><button class="more" aria-label="Isometric options"><svg class="ar"><use href="#arrow"/></svg></button></div>
    <div class="set"><button class="lit" aria-label="Object snap tracking" aria-pressed="true"><svg class="i"><use href="#otrack"/></svg></button><button class="lit" aria-label="Object snap" aria-pressed="true"><svg class="i"><use href="#osnap"/></svg></button><button class="more" aria-label="Object snap options"><svg class="ar"><use href="#arrow"/></svg></button></div>
    <div class="set"><button class="lit" aria-label="Annotation visibility" aria-pressed="true"><svg class="i"><use href="#annovis"/></svg></button><button aria-label="Auto scale"><svg class="i"><use href="#annoauto"/></svg></button><button aria-label="Annotation scale"><svg class="i"><use href="#anno"/></svg></button><button class="ratio">1:1<svg class="ar"><use href="#arrow"/></svg></button></div>
    <div class="set"><button aria-label="Workspace"><svg class="i"><use href="#gear"/></svg></button><button class="more" aria-label="Workspace options"><svg class="ar"><use href="#arrow"/></svg></button></div>
    <div class="set"><button aria-label="Annotation monitor"><svg class="i"><use href="#bigplus"/></svg></button></div>
    <div class="set"><button aria-label="Isolate objects"><svg class="i"><use href="#isolate"/></svg></button></div>
    <div class="set"><button aria-label="Clean screen"><svg class="i"><use href="#clean"/></svg></button><button aria-label="Customization"><svg class="i"><use href="#menu"/></svg></button></div>
  </div>
</footer>
</body>
</html>
```
FILE: styles.css
```css
:root {
  --dark: #222933;
  --panel: #3b4453;
  --field: #4c586a;
  --line: #252c37;
  --text: #e4e6e9;
  --lit: #5f8fc6;
}
* { box-sizing: border-box; }
body {
  margin: 0;
  height: 100vh;
  display: flex;
  flex-direction: column;
  overflow: hidden;
  background: var(--dark);
  color: var(--text);
  font: 11px/16px "Open Sans", "Noto Sans", sans-serif;
}
button, input, select { font: inherit; color: inherit; background: none; border: 0; padding: 0; margin: 0; }
a { color: inherit; text-decoration: none; }
svg { fill: none; stroke: #dcdcdc; display: block; flex: none; }
.sprite { position: absolute; width: 0; height: 0; }
.i { width: 16px; height: 16px; }
.dd { width: 6px; height: 3px; }
.ar { width: 8px; height: 4px; }

kbd {
  position: absolute;
  font: 11px/12px "Open Sans", sans-serif;
  color: #333;
  background: #f4f4f4;
  border: 1px solid #9a9a9a;
  box-shadow: 1px 2px 2px rgba(0, 0, 0, .5);
  padding: 0 3px;
  z-index: 2;
}
kbd.off { color: #999; background: #ddd; }

/* header */
.header { display: grid; grid-template: 27px 18px / 46px 1fr; }
.logo { grid-row: 1 / 3; align-self: start; padding: 6px 0 0 7px; }
.logo svg { width: 26px; height: 28px; stroke: none; }
.titlebar { display: flex; align-items: center; min-width: 0; padding-bottom: 3px; }
.qat { display: flex; width: 270px; padding-left: 3px; align-items: center; flex: none; }
.qat button { position: relative; width: 24px; height: 22px; display: flex; align-items: center; }
.qat kbd { left: 5px; top: 6px; line-height: 13px; }
.qat .slim { width: 10px; justify-content: center; }
.qat .dim { opacity: .4; }
.qat .customize { justify-content: center; }
.customize .ar { border-top: 1px solid #d8dade; height: 7px; padding-top: 2px; }
.title { flex: 1; min-width: 0; display: flex; gap: 14px; overflow: hidden; white-space: nowrap; font: inherit; color: #f0f0f0; }
.tools { display: flex; align-items: center; flex: none; }
.expand { border-left: 4px solid #e4e4e4; border-top: 4px solid transparent; border-bottom: 4px solid transparent; margin-right: 5px; }
.find { width: 178px; height: 20px; background: #444d5e; padding: 0 3px; margin-right: 6px; font-style: italic; }
.find::placeholder { color: #b4b9c2; }
.signin { display: flex; align-items: center; gap: 5px; width: 112px; margin: 0 10px 0 7px; }
.signin .dd { margin-left: auto; }
.pair { display: flex; align-items: center; gap: 5px; margin-left: 6px; }
.help { border-left: 1px solid #4a515d; padding-left: 9px; height: 20px; margin-left: 10px; }
.q { width: 16px; height: 16px; border-radius: 8px; background: #dcdcdc; color: #222933; font-size: 12px; font-weight: 700; text-align: center; }
.win { display: flex; gap: 10px; margin: 0 4px 0 68px; }

.tabs { display: flex; gap: 3px; color: #a6abb3; }
.tabs a, .tabs button { position: relative; padding: 0 9px; line-height: 16px; }
.tabs .on { background: var(--panel); color: #f0f0f0; }
.tabs kbd { left: 50%; top: 14px; transform: translateX(-50%); line-height: 12px; }
.tabs .collapse { padding: 0; margin-left: 18px; }
.collapse i { display: block; width: 15px; height: 8px; background: #f4f4f4; }
.collapse i::before { content: ""; display: block; width: 0; margin: auto; border: 3px solid transparent; border-bottom-color: #555; border-top-width: 2px; }
.tabs .collapse-list { padding: 0; width: 10px; }
.collapse-list .dd { margin: auto; }
.tabs .collapse-list kbd { left: 16px; }

/* ribbon */
.ribbon { display: flex; height: 97px; padding: 0 2px; }
.panel { background: var(--panel); border-right: 1px solid var(--line); display: flex; flex-direction: column; flex: none; }
.cells { display: grid; grid-template-rows: repeat(3, 24px); grid-auto-flow: column; padding-top: 4px; height: 78px; }
.big { grid-row: 1 / 4; display: flex; flex-direction: column; align-items: center; line-height: 15px; padding-top: 3px; white-space: nowrap; }
.big svg:first-child { width: 32px; height: 32px; margin-bottom: 4px; }
.big .dd { margin-top: 3px; }
.small { display: flex; align-items: center; gap: 5px; padding-left: 6px; white-space: nowrap; }
.small.only { padding: 0; justify-content: center; }
.split { padding-right: 5px; }
.split .dd { margin-left: auto; }
.name { display: flex; justify-content: center; align-items: center; gap: 7px; line-height: 19px; }
.foot { display: grid; grid-template-columns: 1fr auto; }
.launch { width: 14px; margin-left: -14px; }
.launch svg { width: 8px; height: 8px; margin-left: 4px; }
.pressed { background: #3d6587; outline: 1px solid #6bb2e8; outline-offset: -1px; height: 22px; align-self: center; }

.draw { width: 224px; }
.draw .cells { grid-template-columns: 42px 45px 54px 38px 1fr; }
.draw .split { padding-right: 10px; }
.modify { width: 249px; }
.modify .cells { grid-template-columns: 72px 68px 76px 1fr; }
.modify .split { padding-right: 3px; }
.modify .small:nth-child(n + 10) { padding-left: 7px; }
.annotation { width: 190px; }
.annotation .cells { grid-template-columns: 50px 56px 1fr; }
.annotation .small { padding-left: 8px; }
.layers { width: 273px; }
.layers .cells { grid-template-columns: 62px repeat(4, 24px) 1fr; grid-auto-flow: row; }
.layers .small:not(.only) { padding-left: 4px; }
.layers .combo { grid-column: 2 / 7; }
.block { width: 161px; }
.block .cells { grid-template-columns: 42px 1fr; }
.block .small { padding-left: 4px; }
.block .split { padding-right: 7px; }
.properties { width: 265px; }
.properties .cells { grid-template-columns: 62px 20px 1fr; grid-auto-flow: row; }
.groups { width: 69px; }
.groups .cells { grid-template-columns: 42px 24px; }
.utilities { width: 97px; }
.utilities .cells { grid-template-columns: 70px 24px; }
.clipboard { width: 80px; }
.clipboard .cells { grid-template-columns: 54px 22px; }
.viewp { flex: 1; }
.viewp .cells { grid-template-columns: 62px; padding-top: 9px; }
.viewp .foot { grid-template-columns: auto auto; justify-content: start; padding-left: 5px; }
.viewp .launch { margin-left: 3px; }

.combo { display: flex; align-items: center; gap: 3px; height: 22px; align-self: center; margin-right: 3px; padding: 0 1px 0 3px; background: var(--field); border: 1px solid #2b3340; }
.combo select { appearance: none; flex: 1; min-width: 0; outline: 0; }
.combo .swatch { width: 14px; height: 14px; background: #fff; border: 1px solid #111; margin: 0 2px; }
.combo.color .swatch { width: 16px; height: 16px; border-color: #ddd; margin: 0 7px 0 9px; }
.rule { width: 64px; height: 1px; background: #f4f4f4; }
.mid { align-self: center; justify-self: center; }

/* drawing tabs */
.files { display: flex; align-items: flex-end; height: 31px; padding-left: 20px; border-bottom: 4px solid var(--panel); }
.file { height: 22px; line-height: 23px; background: #2c3440; color: #b4b8be; padding: 0 11px; clip-path: polygon(0 100%, 5px 14px, 9px 3px, 13px 0, calc(100% - 13px) 0, calc(100% - 9px) 3px, calc(100% - 5px) 14px, 100% 100%); }
.start { width: 124px; }
.file.on { background: var(--panel); color: #f0f0f0; display: flex; align-items: center; gap: 9px; width: 190px; }
.file .x { width: 8px; height: 8px; stroke: #a0a5ad; stroke-width: 2; }
.file.add { width: 28px; height: 18px; padding: 0 6px; margin: 0 0 2px 3px; background: #2c3440; }

/* canvas */
.canvas { flex: 1; min-height: 0; position: relative; background: #000; overflow: hidden; }
.drawing { width: 100%; height: 100%; stroke: none; }
.viewlabel { position: absolute; left: 3px; top: 6px; font-size: 12px; }
.viewwin { position: absolute; right: 11px; top: 10px; display: flex; gap: 10px; }
.viewwin svg { width: 10px; height: 10px; fill: #f0f0f0; stroke: none; }
.cube { position: absolute; right: 13px; top: 80px; width: 142px; }
.cube > svg { width: 142px; height: 20px; position: absolute; top: 47px; left: 0; stroke: none; }
.face { position: relative; display: block; width: 52px; height: 52px; margin-left: 46px; padding: 10px; background: #a2a2a2; }
.face span { display: block; background: #999ca1; font: 700 13px/32px "Open Sans", sans-serif; color: #3f4145; }
.ucs { position: absolute; right: 49px; top: 193px; width: 68px; height: 18px; border: 1px solid #6f6f7a; border-radius: 4px; background: #8b8b96; color: #44444e; line-height: 14px; display: flex; align-items: center; justify-content: space-between; padding: 0 5px 2px 4px; }
.ucs .ar { opacity: .5; }
.navbar { position: absolute; right: 4px; top: 236px; width: 32px; background: #424242; border-radius: 3px; }
.navbar svg { width: 32px; height: 212px; stroke: none; }
.axes { position: absolute; left: 14px; bottom: 14px; width: 72px; height: 72px; stroke: #fff; }
.cross { position: absolute; right: 0; bottom: 199px; width: 49px; height: 98px; stroke: #d8d8d8; }

.command { position: absolute; left: 20%; width: 60%; bottom: 1px; height: 26px; display: flex; align-items: center; background: #20252e; border-radius: 2px; }
.grip { width: 6px; height: 18px; margin: 0 5px 0 4px; background: repeating-linear-gradient(#20252e 0 1px, transparent 1px 3px), repeating-linear-gradient(90deg, #9a9a9a 0 2px, #20252e 2px 4px); }
.cx svg { width: 8px; height: 8px; stroke: #a9acb1; stroke-width: 2; }
.wrench { margin: 0 7px 0 12px; }
.wrench svg { width: 14px; height: 14px; stroke: none; }
.field { flex: 1; height: 25px; display: flex; align-items: center; gap: 4px; padding: 0 4px; background: #b2b2b2; border-radius: 2px; }
.field input { flex: 1; outline: 0; padding-left: 2px; font-size: 12px; font-style: italic; color: #222; }
.field input::placeholder { color: #555; }
.prompt { width: 16px; height: 12px; }
.ar.dark { fill: #444; stroke: none; }

/* status bar */
.status { flex: none; height: 29px; display: flex; justify-content: space-between; border-top: 1px solid #353c47; }
.layouts { display: flex; padding-left: 11px; gap: 2px; color: #b4b8be; font-size: 12px; }
.layouts > * { height: 17px; line-height: 15px; padding: 0 11px; background: #2f3744; clip-path: polygon(0 0, 100% 0, calc(100% - 5px) 90%, calc(100% - 8px) 100%, 8px 100%, 5px 90%); }
.layouts .on { background: var(--panel); color: #fff; font-weight: 700; }
.layouts .add { padding: 0 4px; }
.toggles { display: flex; gap: 3px; padding: 1px 1px 0 0; font-size: 12px; }
.set { display: flex; background: #323a48; height: 25px; padding-top: 1px; }
.set button { width: 24px; height: 22px; display: flex; align-items: center; justify-content: center; }
.set .more { width: 16px; }
.set .lit { background: var(--lit); width: 22px; margin: 0 1px; }
.set .model { width: 45px; }
.set .ratio { width: 33px; gap: 3px; }
```
